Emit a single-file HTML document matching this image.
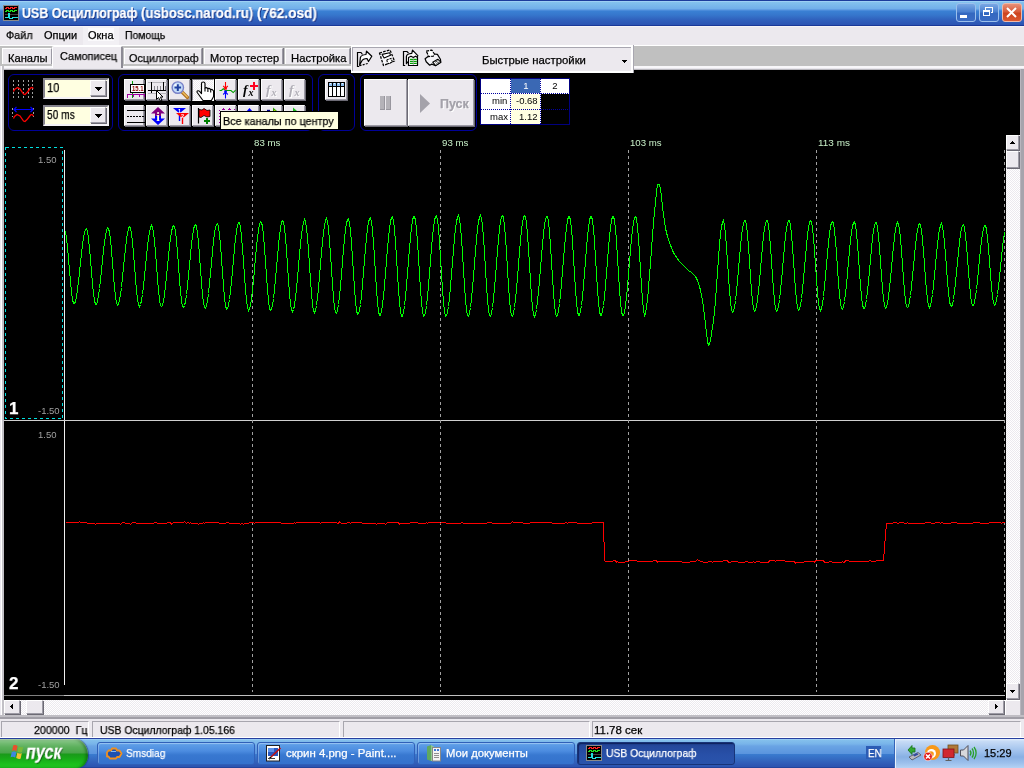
<!DOCTYPE html>
<html lang="ru"><head><meta charset="utf-8"><title>USB Осциллограф</title>
<style>
html,body{margin:0;padding:0;}
body{width:1024px;height:768px;overflow:hidden;background:#ece9ee;font-family:"Liberation Sans", sans-serif;position:relative;}
.a{position:absolute;box-sizing:border-box;}
.t{position:absolute;white-space:pre;will-change:transform;}
.k{-webkit-text-stroke:0.25px currentColor;}
svg{position:absolute;overflow:visible;will-change:transform;}
.btn{position:absolute;box-sizing:border-box;background:#ece9ee;border-top:1px solid #fff;border-left:1px solid #fff;border-right:1px solid #9c9aa4;border-bottom:1px solid #9c9aa4;box-shadow:1px 1px 0 #6c6a74;}
.dith{background-color:#fff;background-image:linear-gradient(45deg,#ece9ee 25%,transparent 25%,transparent 75%,#ece9ee 75%),linear-gradient(45deg,#ece9ee 25%,transparent 25%,transparent 75%,#ece9ee 75%);background-size:2px 2px;background-position:0 0,1px 1px;}
</style></head>
<body>
<div class="a" style="left:0px;top:0px;width:1024px;height:26px;background:linear-gradient(to bottom,#1c3c9c 0px,#1c3c9c 1px,#9dd0f4 1px,#9dd0f4 2px,#84c2ee 2px,#72b0ea 8.5px,#5a96e0 10px,#3a80d4 11px,#3676cc 15px,#3060bc 20px,#2c54b2 25px,#1a3898 25px,#1a3898 26px);"></div>
<svg style="left:3px;top:5px" width="16" height="16" viewBox="0 0 16 16" shape-rendering="crispEdges">
<rect x="0" y="0" width="16" height="16" fill="#8a8a8a"/><rect x="1" y="1" width="14" height="14" fill="#000"/>
<path d="M1.5 3.5h2v-1h2v1h2v-1h2v1h2v-1h2" stroke="#ff2020" fill="none"/>
<path d="M1.5 6.5h2v-1h2v1h2v-1h2v1h2v-1h2" stroke="#20e020" fill="none"/>
<path d="M1.5 9.5h13" stroke="#404040" fill="none"/>
<path d="M1.5 12.5h4v-4h1v5h3v-1h5" stroke="#20e0e0" fill="none"/>
</svg>
<span id="t1" class="t k" style="left:22.00px;top:3.55px;font-size:14px;line-height:18px;color:#fff;font-weight:bold;font-style:normal;text-shadow:1px 1px 0 #1a2f80;transform:scaleX(0.8881);transform-origin:0 100%;">USB Осциллограф </span>
<span id="t2" class="t k" style="left:140.70px;top:3.55px;font-size:14px;line-height:18px;color:#fff;font-weight:bold;font-style:normal;text-shadow:1px 1px 0 #1a2f80;transform:scaleX(0.9431);transform-origin:0 100%;">(usbosc.narod.ru) </span>
<span id="t3" class="t k" style="left:257.00px;top:3.55px;font-size:14px;line-height:18px;color:#fff;font-weight:bold;font-style:normal;text-shadow:1px 1px 0 #1a2f80;transform:scaleX(0.9754);transform-origin:0 100%;">(762.osd)</span>
<div class="a" style="left:956px;top:3px;width:20px;height:19px;border-radius:3px;border:1px solid #9cc0ec;background:linear-gradient(to bottom,#7aa8e4 0%,#4a80d0 45%,#3468c0 55%,#3a6cc4 100%);"></div><div class="a" style="left:960px;top:15px;width:7px;height:3px;background:#fff;"></div>
<div class="a" style="left:979px;top:3px;width:20px;height:19px;border-radius:3px;border:1px solid #9cc0ec;background:linear-gradient(to bottom,#7aa8e4 0%,#4a80d0 45%,#3468c0 55%,#3a6cc4 100%);"></div><svg style="left:978px;top:3px" width="20" height="19" viewBox="0 0 20 19" shape-rendering="crispEdges"><path d="M7.5 6.5v-2h7v5h-2" fill="none" stroke="#fff" stroke-width="1"/><rect x="5.5" y="7" width="6" height="5.5" fill="none" stroke="#fff" stroke-width="1"/><path d="M5 7.5h7" stroke="#fff" stroke-width="2"/></svg>
<div class="a" style="left:1002px;top:3px;width:20px;height:19px;border-radius:3px;border:1px solid #f0b8a8;background:linear-gradient(to bottom,#e89078 0%,#d85c3c 45%,#cc4420 55%,#dc5830 100%);"></div><svg style="left:1002px;top:3px" width="20" height="19" viewBox="0 0 20 19"><path d="M5 5l9 9M14 5l-9 9" fill="none" stroke="#fff" stroke-width="2"/></svg>
<div class="a" style="left:0px;top:26px;width:1024px;height:1px;background:#f6f4f6;"></div>
<div class="a" style="left:83px;top:27px;width:36px;height:18px;background:#f2f0f4;"></div>
<div class="a" style="left:88px;top:28px;width:26px;height:13px;background:#fbfafc;"></div>
<span id="t4" class="t k" style="left:5.50px;top:28.19px;font-size:11px;line-height:14px;color:#000;font-weight:normal;font-style:normal;transform:scaleX(0.9815);transform-origin:0 100%;">Файл</span>
<span id="t5" class="t k" style="left:43.50px;top:28.19px;font-size:11px;line-height:14px;color:#000;font-weight:normal;font-style:normal;transform:scaleX(1.0000);transform-origin:0 100%;">Опции</span>
<span id="t6" class="t k" style="left:88.00px;top:28.19px;font-size:11px;line-height:14px;color:#000;font-weight:normal;font-style:normal;transform:scaleX(1.0000);transform-origin:0 100%;">Окна</span>
<span id="t7" class="t k" style="left:125.00px;top:28.19px;font-size:11px;line-height:14px;color:#000;font-weight:normal;font-style:normal;transform:scaleX(0.9465);transform-origin:0 100%;">Помощь</span>
<div class="a" style="left:0px;top:45px;width:1024px;height:1px;background:#fff;"></div>
<div class="a" style="left:0px;top:46px;width:1024px;height:20px;background:#c0c0c0;"></div>
<div class="a" style="left:0px;top:66px;width:1024px;height:2px;background:#f8f7fa;"></div>
<div class="a" style="left:2px;top:68px;width:1022px;height:1px;background:#e8e6ec;"></div>
<div class="a" style="left:2px;top:69px;width:1022px;height:1px;background:#b8b6bc;"></div>
<div class="a" style="left:2px;top:48px;width:50px;height:16px;background:#ece9ee;border-top:1px solid #fff;border-left:1px solid #fff;border-right:1px solid #9c9aa4;box-shadow:1px 0 0 #7c7a84;"></div><span id="t8" class="t k" style="left:8.40px;top:51.19px;font-size:11px;line-height:14px;color:#000;font-weight:normal;font-style:normal;transform:scaleX(1.0128);transform-origin:0 100%;">Каналы</span>
<div class="a" style="left:124px;top:48px;width:78px;height:16px;background:#ece9ee;border-top:1px solid #fff;border-left:1px solid #fff;border-right:1px solid #9c9aa4;box-shadow:1px 0 0 #7c7a84;"></div><span id="t9" class="t k" style="left:128.50px;top:51.19px;font-size:11px;line-height:14px;color:#000;font-weight:normal;font-style:normal;transform:scaleX(0.9831);transform-origin:0 100%;">Осциллограф</span>
<div class="a" style="left:204px;top:48px;width:79px;height:16px;background:#ece9ee;border-top:1px solid #fff;border-left:1px solid #fff;border-right:1px solid #9c9aa4;box-shadow:1px 0 0 #7c7a84;"></div><span id="t10" class="t k" style="left:210.00px;top:51.19px;font-size:11px;line-height:14px;color:#000;font-weight:normal;font-style:normal;transform:scaleX(1.0000);transform-origin:0 100%;">Мотор тестер</span>
<div class="a" style="left:285px;top:48px;width:65px;height:16px;background:#ece9ee;border-top:1px solid #fff;border-left:1px solid #fff;border-right:1px solid #9c9aa4;box-shadow:1px 0 0 #7c7a84;"></div><span id="t11" class="t k" style="left:290.70px;top:51.19px;font-size:11px;line-height:14px;color:#000;font-weight:normal;font-style:normal;transform:scaleX(1.0241);transform-origin:0 100%;">Настройка</span>
<div class="a" style="left:52px;top:46px;width:71px;height:22px;background:#ece9ee;border-top:1px solid #fff;border-left:1px solid #fff;border-right:2px solid #8c8a94;border-radius:2px 2px 0 0;"></div><span id="t12" class="t k" style="left:59.70px;top:49.19px;font-size:11px;line-height:14px;color:#000;font-weight:normal;font-style:normal;transform:scaleX(0.9879);transform-origin:0 100%;">Самописец</span>
<div class="a" style="left:0px;top:66px;width:4px;height:653px;background:linear-gradient(to right,#ece9f0 0px,#ece9f0 1px,#fff 1px,#fff 2px,#c2c0c6 2px,#c2c0c6 4px);"></div>
<div class="a" style="left:4px;top:70px;width:1016px;height:630px;background:#000;"></div>
<div class="a" style="left:1020px;top:69px;width:4px;height:650px;background:linear-gradient(to right,#b8b6be 0px,#b8b6be 1px,#a6a4ac 1px,#a6a4ac 4px);"></div>
<div class="a" style="left:351px;top:45px;width:282px;height:28px;background:#ece9ee;border-top:2px solid #fff;border-left:1px solid #fff;border-right:2px solid #fff;border-bottom:2px solid #fff;box-shadow:1px 0 0 #a8a6b0;"></div>
<div class="a" style="left:352px;top:47px;width:279px;height:1px;background:#a8a6b0;"></div>
<div class="a" style="left:352px;top:47px;width:1px;height:24px;background:#a8a6b0;"></div>
<span id="t13" class="t k" style="left:482.00px;top:53.19px;font-size:11px;line-height:14px;color:#000;font-weight:normal;font-style:normal;transform:scaleX(1.0297);transform-origin:0 100%;">Быстрые настройки</span>
<svg style="left:622px;top:60px" width="5" height="3" viewBox="0 0 5 3" shape-rendering="crispEdges"><path d="M0 0h5v1h-1v1h-1v1h-1v-1h-1v-1h-1z" fill="#000"/></svg>
<div class="a" style="left:8px;top:74px;width:105px;height:57px;border:1px solid #000098;border-radius:6px;"></div>
<div class="a" style="left:118px;top:74px;width:195px;height:57px;border:1px solid #000098;border-radius:6px;"></div>
<div class="a" style="left:318px;top:74px;width:37px;height:57px;border:1px solid #000098;border-radius:6px;"></div>
<div class="a" style="left:360px;top:74px;width:117px;height:57px;border:1px solid #000098;border-radius:6px;"></div>
<div class="a" style="left:43px;top:78px;width:66px;height:21px;background:#ffffe1;border-top:2px solid #84828c;border-left:2px solid #84828c;border-right:2px solid #f4f2f6;border-bottom:2px solid #f4f2f6;"></div><div class="btn" style="left:90px;top:80px;width:16px;height:16px;"></div><svg style="left:95px;top:87px" width="7" height="4" viewBox="0 0 7 4" shape-rendering="crispEdges"><path d="M0 0h7l-3.5 4z" fill="#000"/></svg><span id="t14" class="t k" style="left:47.00px;top:79.84px;font-size:12px;line-height:16px;color:#000;font-weight:normal;font-style:normal;transform:scaleX(0.9231);transform-origin:0 100%;">10</span>
<div class="a" style="left:43px;top:105px;width:66px;height:21px;background:#ffffe1;border-top:2px solid #84828c;border-left:2px solid #84828c;border-right:2px solid #f4f2f6;border-bottom:2px solid #f4f2f6;"></div><div class="btn" style="left:90px;top:107px;width:16px;height:16px;"></div><svg style="left:95px;top:114px" width="7" height="4" viewBox="0 0 7 4" shape-rendering="crispEdges"><path d="M0 0h7l-3.5 4z" fill="#000"/></svg><span id="t15" class="t k" style="left:47.00px;top:106.84px;font-size:12px;line-height:16px;color:#000;font-weight:normal;font-style:normal;transform:scaleX(0.8485);transform-origin:0 100%;">50 ms</span>
<div class="btn" style="left:124px;top:79px;width:20px;height:21px;"></div>
<div class="btn" style="left:124px;top:105px;width:20px;height:21px;"></div>
<div class="btn" style="left:146px;top:79px;width:21px;height:21px;"></div>
<div class="btn" style="left:146px;top:105px;width:21px;height:21px;"></div>
<div class="btn" style="left:169px;top:79px;width:21px;height:21px;"></div>
<div class="btn" style="left:169px;top:105px;width:21px;height:21px;"></div>
<div class="a dith" style="left:192px;top:79px;width:22px;height:22px;border-top:1px solid #84828c;border-left:1px solid #84828c;border-right:1px solid #fff;border-bottom:1px solid #fff;"></div>
<div class="btn" style="left:192px;top:105px;width:21px;height:21px;"></div>
<div class="btn" style="left:215px;top:79px;width:21px;height:21px;"></div>
<div class="btn" style="left:215px;top:105px;width:21px;height:21px;"></div>
<div class="btn" style="left:238px;top:79px;width:21px;height:21px;"></div>
<div class="btn" style="left:238px;top:105px;width:21px;height:21px;"></div>
<div class="btn" style="left:261px;top:79px;width:21px;height:21px;"></div>
<div class="btn" style="left:261px;top:105px;width:21px;height:21px;"></div>
<div class="btn" style="left:284px;top:79px;width:21px;height:21px;"></div>
<div class="btn" style="left:284px;top:105px;width:21px;height:21px;"></div>
<div class="btn" style="left:325px;top:79px;width:22px;height:21px;"></div>
<div class="btn" style="left:364px;top:79px;width:43px;height:47px;"></div>
<div class="btn" style="left:408px;top:79px;width:66px;height:47px;"></div>
<svg style="left:8px;top:76px" width="30" height="26" viewBox="0 0 30 26" shape-rendering="crispEdges"><path d="M5.5 4V22" stroke="#a0a0a0" stroke-dasharray="2 2"/><path d="M10.5 4V22" stroke="#a0a0a0" stroke-dasharray="2 2"/><path d="M15.5 4V22" stroke="#a0a0a0" stroke-dasharray="2 2"/><path d="M20.5 4V22" stroke="#a0a0a0" stroke-dasharray="2 2"/><path d="M24.5 4V22" stroke="#a0a0a0" stroke-dasharray="2 2"/><path d="M5.5 15.5L6.5 13.5L9.5 11.5L12 13L15.5 18L17 18.5L19.5 16L22.5 12L24 11.5L25.5 12.5" stroke="#ff0000" stroke-width="1.3" fill="none" shape-rendering="auto"/></svg><svg style="left:8px;top:104px" width="30" height="22" viewBox="0 0 30 22" shape-rendering="crispEdges"><path d="M4.5 4V13M25.5 4V13" stroke="#a0a0a0" stroke-dasharray="2 2"/><path d="M6 5.5H25M8.5 3L6 5.5L8.5 8M22.500 3L25 5.5L22.500 8" stroke="#0000ff" stroke-width="1.2" fill="none" shape-rendering="auto"/><path d="M5.500 14.5L6.500 12.5L9 10.500L12 12L15.500 17L17 17.500L19.500 15L22.500 11L24 10.500L25.500 12" stroke="#ff0000" stroke-width="1.3" fill="none" shape-rendering="auto"/></svg><svg style="left:124px;top:79px" width="22" height="22" viewBox="0 0 22 22" shape-rendering="crispEdges"><path d="M8.500 2V19" stroke="#00a000"/><path d="M3.500 19V15.500H20.500V18M9.500 15.500V18M15.500 15.500V18" stroke="#a000a0" fill="none"/><rect x="6.500" y="5.500" width="14" height="8" fill="#fff" stroke="#000"/><text x="8" y="12" font-size="7" font-weight="bold" fill="#900000" style="font-family:'Liberation Sans',sans-serif" textLength="11.500" lengthAdjust="spacingAndGlyphs">15.1</text></svg><svg style="left:146px;top:79px" width="22" height="22" viewBox="0 0 22 22" shape-rendering="crispEdges"><path d="M2 3.500H21M2 14.500H21" stroke="#b8b6bc"/><path d="M8.500 7V11M11.500 7V11M14.500 7V11M19.500 7V11" stroke="#88868e"/><path d="M2 11.500H20M5.500 3V14M17.500 3V11" stroke="#000"/><path d="M10.500 11.500V20.500L12.500 18.500L14.500 22L16 21.500L14.500 18L17 18Z" fill="#fff" stroke="#000" stroke-width="1" shape-rendering="auto"/></svg><svg style="left:169px;top:79px" width="22" height="22" viewBox="0 0 22 22"><path d="M12.500 12.500L18.500 18.500" stroke="#b07020" stroke-width="3.200" stroke-linecap="round"/><path d="M12.800 12.500L18.300 18" stroke="#f0c060" stroke-width="1.200" stroke-linecap="round"/><circle cx="8.800" cy="8.600" r="5.700" fill="#c4dcf8" stroke="#7880c8" stroke-width="1.400"/><circle cx="7" cy="6.500" r="1.800" fill="#fff" opacity="0.800"/><path d="M5.500 8.600H12.100M8.800 5.300V11.900" stroke="#2040a0" stroke-width="2"/></svg><svg style="left:192px;top:79px" width="23" height="23" viewBox="0 0 23 23"><path d="M11 21.500L5.200 13.500Q4.600 12.200 5.800 11.800Q6.800 11.500 7.600 12.400L9.500 14.600V4.500Q9.500 3 11.200 3Q13 3 13 4.500V9Q14.300 8.200 15.800 9.500Q17.200 8.900 18.600 10.400Q20.400 10 21.600 12V17.500L19.400 21.500Z" fill="#fff" stroke="#000" stroke-width="1.150" stroke-linejoin="round"/><path d="M13 9V12.500M15.900 9.700V13M18.700 10.800V13.500" stroke="#000" stroke-width="1.100"/></svg><svg style="left:215px;top:79px" width="22" height="22" viewBox="0 0 22 22"><path d="M4.500 11.500H6.500L8.300 9.700L10.400 11.500H16L18.200 13.600L20.600 11.200" stroke="#00a000" fill="none" stroke-width="1.100"/><path d="M10.500 3V9" stroke="#ff0000" stroke-width="1.100"/><path d="M8.200 7L10.500 9.300L12.800 7" stroke="#ff0000" stroke-width="1.100" fill="none"/><rect x="9.200" y="8.600" width="2.700" height="2" fill="#ff0000"/><path d="M10.500 13V19.500" stroke="#0000ff" stroke-width="1.100"/><path d="M8.200 15.500L10.500 13.200L12.800 15.500" stroke="#0000ff" stroke-width="1.100" fill="none"/><rect x="9.200" y="11.600" width="2.700" height="2" fill="#0000ff"/></svg><svg style="left:238px;top:79px" width="22" height="22" viewBox="0 0 22 22"><text x="5" y="15" font-size="13.500" font-style="italic" font-weight="bold" fill="#000" style="font-family:'Liberation Serif',serif">f</text><text x="10.500" y="17" font-size="10" font-style="italic" font-weight="bold" fill="#000" style="font-family:'Liberation Serif',serif">x</text><path d="M12 7H20M16 3V11" stroke="#ff0020" stroke-width="2" shape-rendering="crispEdges"/></svg><svg style="left:261px;top:79px" width="22" height="22" viewBox="0 0 22 22"><text x="6" y="16" font-size="13.500" font-style="italic" font-weight="bold" fill="#fff" style="font-family:'Liberation Serif',serif">f</text><text x="11.500" y="18" font-size="10" font-style="italic" font-weight="bold" fill="#fff" style="font-family:'Liberation Serif',serif">x</text><text x="5" y="15" font-size="13.500" font-style="italic" font-weight="bold" fill="#b0aeb6" style="font-family:'Liberation Serif',serif">f</text><text x="10.500" y="17" font-size="10" font-style="italic" font-weight="bold" fill="#b0aeb6" style="font-family:'Liberation Serif',serif">x</text></svg><svg style="left:284px;top:79px" width="22" height="22" viewBox="0 0 22 22"><text x="6" y="16" font-size="13.500" font-style="italic" font-weight="bold" fill="#fff" style="font-family:'Liberation Serif',serif">f</text><text x="11.500" y="18" font-size="10" font-style="italic" font-weight="bold" fill="#fff" style="font-family:'Liberation Serif',serif">x</text><text x="5" y="15" font-size="13.500" font-style="italic" font-weight="bold" fill="#b0aeb6" style="font-family:'Liberation Serif',serif">f</text><text x="10.500" y="17" font-size="10" font-style="italic" font-weight="bold" fill="#b0aeb6" style="font-family:'Liberation Serif',serif">x</text></svg><svg style="left:124px;top:105px" width="22" height="22" viewBox="0 0 22 22" shape-rendering="crispEdges"><path d="M3 5.500H21M3 17.500H21" stroke="#000"/><path d="M3 11.500H21" stroke="#000" stroke-dasharray="2 1"/></svg><svg style="left:146px;top:105px" width="22" height="22" viewBox="0 0 22 22"><path d="M12 2L19 8.500H15V11H9V8.500H5Z" fill="#800080"/><path d="M12 20L19 13.500H15V11H9V13.500H5Z" fill="#0000ff"/><text x="12" y="16" font-size="13" font-weight="bold" text-anchor="middle" fill="#ffffe0" style="font-family:'Liberation Serif',serif">i</text></svg><svg style="left:169px;top:105px" width="22" height="22" viewBox="0 0 22 22"><path d="M4 3H17L10.500 8.500Z" fill="#0000ff"/><path d="M10.500 8V16" stroke="#0000ff" stroke-width="1.400"/><path d="M7 8H20L13.500 13.500Z" fill="#ff0000"/><path d="M13.500 13V19" stroke="#ff0000" stroke-width="1.400"/><text x="10.500" y="8" font-size="5.500" font-weight="bold" text-anchor="middle" fill="#fff" style="font-family:'Liberation Sans',sans-serif">1</text><text x="13.500" y="13.200" font-size="5.500" font-weight="bold" text-anchor="middle" fill="#fff" style="font-family:'Liberation Sans',sans-serif">2</text></svg><svg style="left:192px;top:105px" width="22" height="22" viewBox="0 0 22 22"><path d="M6.500 3V18.500" stroke="#000" stroke-width="1.200"/><path d="M7 4.500L10 5L12 3.500L15 5.500L18 5V11.500L15 12L12 10.500L9 12.500L7 12Z" fill="#ff0000" stroke="#000" stroke-width="0.800"/><path d="M12 15.500H18M15 12.500V18.500" stroke="#008000" stroke-width="2" shape-rendering="crispEdges"/></svg><svg style="left:215px;top:105px" width="22" height="22" viewBox="0 0 22 22" shape-rendering="crispEdges"><path d="M4.500 5V18" stroke="#a000a0" stroke-dasharray="1 2"/><path d="M6 5l2-2l2 2zM12 5l2-2l2 2zM18 5l2-2l0 2z" fill="#a000a0"/></svg><svg style="left:238px;top:105px" width="22" height="22" viewBox="0 0 22 22"><path d="M8 7L11.500 3L15 7Z" fill="#0000ff"/></svg><svg style="left:261px;top:105px" width="22" height="22" viewBox="0 0 22 22"><path d="M6 5.500H9" stroke="#000090" stroke-width="1.400"/><path d="M12 2.500V8L16 6Z" fill="#30a000"/><path d="M13 5V7L15 6Z" fill="#e0e000"/></svg><svg style="left:284px;top:105px" width="22" height="22" viewBox="0 0 22 22"><path d="M9 2.500V8L13 6Z" fill="#20c020"/></svg><svg style="left:325px;top:79px" width="23" height="22" viewBox="0 0 23 22" shape-rendering="crispEdges"><rect x="3.500" y="3.500" width="16" height="14" fill="#fff" stroke="#000"/><rect x="4" y="4" width="15" height="3" fill="#90c0f0"/><path d="M7.500 4V17M11.500 4V17M15.500 4V17" stroke="#000"/><path d="M4 7.500H19" stroke="#000"/><path d="M5.500 4V5M9.500 4V5M13.500 4V5M17.500 4V5" stroke="#fff"/></svg><svg style="left:356px;top:49px" width="18" height="19" viewBox="0 0 18 19"><path d="M1.500 18V3.500H5L6.500 5.500M1.500 17.500H3.200" stroke="#000" stroke-width="1.200" fill="none"/><path d="M3.600 16.200L4.400 8.500Q5 6 10 5.500L10.500 2.200L15.800 7.200L12.500 12.500L11 9.500Q7 9.500 5.500 12.500Z" fill="#fff" stroke="#000" stroke-width="1.200" stroke-linejoin="round"/><path d="M3.600 16.700L12.500 14.300" stroke="#000" stroke-width="1.200" stroke-dasharray="2 1.200" fill="none"/></svg><svg style="left:378px;top:49px" width="18" height="19" viewBox="0 0 18 19"><path d="M1.500 4L12 1L16.500 12L5.500 16.500Z" fill="#f8f7fa" stroke="#000" stroke-width="1.300" stroke-dasharray="2.600 1.200" stroke-linejoin="round"/><path d="M4.100 5.400L11.700 3.700L12.500 6.300L6.100 8.900Z" fill="#fff" stroke="#000" stroke-width="1.100" stroke-linejoin="round"/><path d="M8.700 11L13 9.500L14.500 13L10 14.700Z" fill="#fff" stroke="#000" stroke-width="1.100" stroke-dasharray="2 1"/></svg><svg style="left:402px;top:49px" width="18" height="19" viewBox="0 0 18 19"><path d="M1.500 17V2.500H5L6.500 4M1.500 16.500H3.200" stroke="#000" stroke-width="1.200" fill="none"/><path d="M4.400 14.500V7.600Q4.600 4.800 9.800 4.400L10.500 1.100L15.800 6.700L14 10H9Z" fill="#fff" stroke="#000" stroke-width="1.200" stroke-linejoin="round"/><path d="M6.500 16.500V8.500L9 7.200L11.300 8.500L13.500 7.200L15.500 8.500V16.500Z" fill="#fff" stroke="#000" stroke-width="1.200" stroke-linejoin="round"/><path d="M8 10.400H14.800M8 12.300H14.800M8 14.300H14.800" stroke="#00a000" stroke-width="1.200"/><path d="M11.300 9V16" stroke="#a0a0a0" stroke-width="0.800"/></svg><svg style="left:424px;top:49px" width="18" height="19" viewBox="0 0 18 19"><path d="M4.400 7.200L1.100 9.700L2.200 12.750L5.700 16.200L7.800 15.100L11.700 16.600L16.800 13.200L16.400 10.200L13.400 5.400L10.400 5Z" fill="#f4f3f7" stroke="#000" stroke-width="1.200" stroke-linejoin="round"/><path d="M2.200 2.200L7.800 1.100L10.400 5L9.300 7.200L4.400 7.600L3.500 4.600Z" fill="#fff" stroke="#000" stroke-width="1.200" stroke-dasharray="3 1" stroke-linejoin="round"/><path d="M8.700 13.200L13.800 10.200L16.800 13.200L11.700 16.600Z" fill="#fff" stroke="#000" stroke-width="1.100" stroke-linejoin="round"/><path d="M11 13.300L13.800 11.800M12.300 14.500L15 13" stroke="#000" stroke-width="0.700"/></svg>
<div class="a" style="left:380px;top:96px;width:5px;height:14px;background:#b4b2b8;border-right:1px solid #98969e;border-bottom:1px solid #98969e;"></div>
<div class="a" style="left:386px;top:96px;width:5px;height:14px;background:#b4b2b8;border-right:1px solid #98969e;border-bottom:1px solid #98969e;"></div>
<svg style="left:420px;top:94px" width="10" height="19" viewBox="0 0 10 19"><path d="M0 0L10 9.5L0 19z" fill="#a4a2aa"/></svg>
<span id="t16" class="t k" style="left:440.00px;top:95.84px;font-size:12px;line-height:16px;color:#a4a2aa;font-weight:bold;font-style:normal;text-shadow:1px 1px 0 #fff;transform:scaleX(1.0357);transform-origin:0 100%;">Пуск</span>
<div class="a" style="left:480px;top:78px;width:90px;height:47px;background:#fff;border:1px solid #000080;"></div>
<div class="a" style="left:511px;top:79px;width:29px;height:14px;background:#3a68b4;"></div>
<div class="a" style="left:511px;top:94px;width:29px;height:30px;background:#ffffe1;"></div>
<div class="a" style="left:541px;top:94px;width:28px;height:30px;background:#000;"></div>
<div class="a" style="left:481px;top:93px;width:88px;height:1px;background:repeating-linear-gradient(to right,#0000a0 0 1px,transparent 1px 2px);"></div>
<div class="a" style="left:481px;top:109px;width:88px;height:1px;background:repeating-linear-gradient(to right,#0000a0 0 1px,transparent 1px 2px);"></div>
<div class="a" style="left:510px;top:79px;width:1px;height:45px;background:repeating-linear-gradient(to bottom,#0000a0 0 1px,transparent 1px 2px);"></div>
<div class="a" style="left:540px;top:79px;width:1px;height:45px;background:repeating-linear-gradient(to bottom,#0000a0 0 1px,transparent 1px 2px);"></div>
<span id="t17" class="t" style="left:375.50px;width:300px;text-align:center;top:79.71px;font-size:9.5px;line-height:12px;color:#fff;font-weight:normal;font-style:normal;">1</span>
<span id="t18" class="t" style="left:405.00px;width:300px;text-align:center;top:79.71px;font-size:9.5px;line-height:12px;color:#000;font-weight:normal;font-style:normal;">2</span>
<span id="t19" class="t" style="right:516.50px;top:94.71px;font-size:9.5px;line-height:12px;color:#000;font-weight:normal;font-style:normal;">min</span>
<span id="t20" class="t" style="right:516.50px;top:110.71px;font-size:9.5px;line-height:12px;color:#000;font-weight:normal;font-style:normal;">max</span>
<span id="t21" class="t" style="right:486.50px;top:94.71px;font-size:9.5px;line-height:12px;color:#000;font-weight:normal;font-style:normal;">-0.68</span>
<span id="t22" class="t" style="right:486.50px;top:110.71px;font-size:9.5px;line-height:12px;color:#000;font-weight:normal;font-style:normal;">1.12</span>
<svg style="left:0;top:0" width="1024" height="768" viewBox="0 0 1024 768" shape-rendering="crispEdges"><rect x="5.5" y="147.5" width="57" height="271" fill="none" stroke="#00e0e0" stroke-width="1" stroke-dasharray="3 3"/><path d="M64.5 150V685" stroke="#f0f0f0" stroke-width="1" fill="none"/><path d="M4 420.5H1005" stroke="#d0d0d0" stroke-width="1" fill="none"/><path d="M4 695.5H64" stroke="#808080" stroke-width="1" fill="none"/><path d="M64 695.5H1005" stroke="#c0c0c0" stroke-width="1" fill="none"/><path d="M252.5 150V692" stroke="#a0a0a0" stroke-width="1" stroke-dasharray="3 3" fill="none"/><path d="M440.5 150V692" stroke="#a0a0a0" stroke-width="1" stroke-dasharray="3 3" fill="none"/><path d="M628.5 150V692" stroke="#a0a0a0" stroke-width="1" stroke-dasharray="3 3" fill="none"/><path d="M816.5 150V692" stroke="#a0a0a0" stroke-width="1" stroke-dasharray="3 3" fill="none"/><path d="M1004.5 150V692" stroke="#a0a0a0" stroke-width="1" stroke-dasharray="3 3" fill="none"/><path d="M65.5,231.5L66.5,237.5L67.5,247.5L68.5,258.5L69.5,270.5L70.5,281.5L71.5,292.5L72.5,299.5L73.5,303.5L74.5,303.5L75.5,301.5L76.5,296.5L77.5,289.5L78.5,281.5L79.5,272.5L80.5,262.5L81.5,253.5L82.5,244.5L83.5,237.5L84.5,232.5L85.5,229.5L86.5,228.5L87.5,231.5L88.5,238.5L89.5,248.5L90.5,259.5L91.5,272.5L92.5,283.5L93.5,293.5L94.5,300.5L95.5,304.5L96.5,304.5L97.5,301.5L98.5,295.5L99.5,288.5L100.5,279.5L101.5,270.5L102.5,260.5L103.5,250.5L104.5,242.5L105.5,235.5L106.5,230.5L107.5,227.5L108.5,228.5L109.5,232.5L110.5,239.5L111.5,250.5L112.5,262.5L113.5,275.5L114.5,287.5L115.5,296.5L116.5,302.5L117.5,305.5L118.5,304.5L119.5,300.5L120.5,294.5L121.5,287.5L122.5,277.5L123.5,267.5L124.5,257.5L125.5,248.5L126.5,239.5L127.5,233.5L128.5,228.5L129.5,226.5L130.5,227.5L131.5,233.5L132.5,241.5L133.5,253.5L134.5,265.5L135.5,278.5L136.5,290.5L137.5,299.5L138.5,304.5L139.5,306.5L140.5,304.5L141.5,300.5L142.5,294.5L143.5,285.5L144.5,276.5L145.5,266.5L146.5,256.5L147.5,246.5L148.5,238.5L149.5,232.5L150.5,227.5L151.5,225.5L152.5,227.5L153.5,232.5L154.5,241.5L155.5,252.5L156.5,265.5L157.5,278.5L158.5,290.5L159.5,299.5L160.5,305.5L161.5,306.5L162.5,305.5L163.5,301.5L164.5,294.5L165.5,286.5L166.5,276.5L167.5,266.5L168.5,256.5L169.5,246.5L170.5,238.5L171.5,231.5L172.5,227.5L173.5,225.5L174.5,226.5L175.5,231.5L176.5,240.5L177.5,252.5L178.5,265.5L179.5,279.5L180.5,291.5L181.5,300.5L182.5,306.5L183.5,307.5L184.5,305.5L185.5,301.5L186.5,294.5L187.5,285.5L188.5,275.5L189.5,265.5L190.5,254.5L191.5,244.5L192.5,236.5L193.5,229.5L194.5,225.5L195.5,224.5L196.5,226.5L197.5,232.5L198.5,242.5L199.5,255.5L200.5,269.5L201.5,282.5L202.5,294.5L203.5,302.5L204.5,307.5L205.5,308.5L206.5,305.5L207.5,300.5L208.5,293.5L209.5,283.5L210.5,273.5L211.5,262.5L212.5,251.5L213.5,241.5L214.5,233.5L215.5,227.5L216.5,224.5L217.5,223.5L218.5,226.5L219.5,234.5L220.5,245.5L221.5,258.5L222.5,272.5L223.5,285.5L224.5,297.5L225.5,305.5L226.5,309.5L227.5,308.5L228.5,305.5L229.5,299.5L230.5,291.5L231.5,281.5L232.5,270.5L233.5,259.5L234.5,248.5L235.5,238.5L236.5,231.5L237.5,225.5L238.5,222.5L239.5,222.5L240.5,227.5L241.5,236.5L242.5,248.5L243.5,261.5L244.5,276.5L245.5,289.5L246.5,300.5L247.5,307.5L248.5,310.5L249.5,308.5L250.5,305.5L251.5,298.5L252.5,290.5L253.5,280.5L254.5,269.5L255.5,257.5L256.5,247.5L257.5,237.5L258.5,230.5L259.5,224.5L260.5,221.5L261.5,222.5L262.5,226.5L263.5,235.5L264.5,247.5L265.5,261.5L266.5,276.5L267.5,289.5L268.5,300.5L269.5,308.5L270.5,310.5L271.5,309.5L272.5,305.5L273.5,298.5L274.5,289.5L275.5,279.5L276.5,267.5L277.5,256.5L278.5,245.5L279.5,235.5L280.5,228.5L281.5,222.5L282.5,220.5L283.5,221.5L284.5,227.5L285.5,237.5L286.5,250.5L287.5,265.5L288.5,280.5L289.5,293.5L290.5,303.5L291.5,309.5L292.5,311.5L293.5,309.5L294.5,305.5L295.5,297.5L296.5,288.5L297.5,277.5L298.5,266.5L299.5,254.5L300.5,243.5L301.5,234.5L302.5,227.5L303.5,222.5L304.5,219.5L305.5,221.5L306.5,227.5L307.5,237.5L308.5,250.5L309.5,265.5L310.5,280.5L311.5,293.5L312.5,304.5L313.5,310.5L314.5,312.5L315.5,310.5L316.5,305.5L317.5,297.5L318.5,288.5L319.5,276.5L320.5,264.5L321.5,252.5L322.5,241.5L323.5,232.5L324.5,225.5L325.5,220.5L326.5,218.5L327.5,221.5L328.5,228.5L329.5,240.5L330.5,254.5L331.5,269.5L332.5,284.5L333.5,297.5L334.5,307.5L335.5,312.5L336.5,313.5L337.5,310.5L338.5,304.5L339.5,296.5L340.5,285.5L341.5,274.5L342.5,261.5L343.5,249.5L344.5,238.5L345.5,229.5L346.5,223.5L347.5,219.5L348.5,218.5L349.5,222.5L350.5,230.5L351.5,243.5L352.5,257.5L353.5,273.5L354.5,288.5L355.5,301.5L356.5,310.5L357.5,314.5L358.5,313.5L359.5,310.5L360.5,304.5L361.5,295.5L362.5,284.5L363.5,272.5L364.5,260.5L365.5,248.5L366.5,237.5L367.5,228.5L368.5,222.5L369.5,218.5L370.5,217.5L371.5,221.5L372.5,230.5L373.5,242.5L374.5,257.5L375.5,273.5L376.5,289.5L377.5,301.5L378.5,311.5L379.5,315.5L380.5,315.5L381.5,311.5L382.5,304.5L383.5,296.5L384.5,285.5L385.5,273.5L386.5,260.5L387.5,248.5L388.5,237.5L389.5,228.5L390.5,221.5L391.5,217.5L392.5,216.5L393.5,220.5L394.5,229.5L395.5,242.5L396.5,257.5L397.5,274.5L398.5,289.5L399.5,302.5L400.5,311.5L401.5,316.5L402.5,316.5L403.5,312.5L404.5,305.5L405.5,296.5L406.5,285.5L407.5,273.5L408.5,260.5L409.5,248.5L410.5,237.5L411.5,227.5L412.5,220.5L413.5,216.5L414.5,216.5L415.5,220.5L416.5,229.5L417.5,241.5L418.5,257.5L419.5,273.5L420.5,289.5L421.5,302.5L422.5,311.5L423.5,316.5L424.5,315.5L425.5,312.5L426.5,305.5L427.5,296.5L428.5,285.5L429.5,273.5L430.5,260.5L431.5,248.5L432.5,236.5L433.5,227.5L434.5,220.5L435.5,216.5L436.5,215.5L437.5,219.5L438.5,228.5L439.5,241.5L440.5,257.5L441.5,273.5L442.5,289.5L443.5,302.5L444.5,311.5L445.5,316.5L446.5,315.5L447.5,312.5L448.5,306.5L449.5,297.5L450.5,286.5L451.5,274.5L452.5,262.5L453.5,249.5L454.5,238.5L455.5,228.5L456.5,221.5L457.5,217.5L458.5,215.5L459.5,218.5L460.5,226.5L461.5,238.5L462.5,253.5L463.5,269.5L464.5,285.5L465.5,299.5L466.5,309.5L467.5,315.5L468.5,316.5L469.5,313.5L470.5,307.5L471.5,298.5L472.5,288.5L473.5,276.5L474.5,263.5L475.5,250.5L476.5,239.5L477.5,229.5L478.5,221.5L479.5,217.5L480.5,215.5L481.5,218.5L482.5,225.5L483.5,237.5L484.5,252.5L485.5,269.5L486.5,285.5L487.5,299.5L488.5,309.5L489.5,315.5L490.5,316.5L491.5,313.5L492.5,307.5L493.5,298.5L494.5,288.5L495.5,276.5L496.5,263.5L497.5,250.5L498.5,239.5L499.5,229.5L500.5,221.5L501.5,216.5L502.5,215.5L503.5,217.5L504.5,225.5L505.5,237.5L506.5,252.5L507.5,269.5L508.5,285.5L509.5,299.5L510.5,309.5L511.5,315.5L512.5,316.5L513.5,313.5L514.5,307.5L515.5,299.5L516.5,289.5L517.5,277.5L518.5,264.5L519.5,252.5L520.5,240.5L521.5,230.5L522.5,222.5L523.5,217.5L524.5,215.5L525.5,216.5L526.5,223.5L527.5,234.5L528.5,248.5L529.5,264.5L530.5,281.5L531.5,295.5L532.5,307.5L533.5,314.5L534.5,316.5L535.5,314.5L536.5,309.5L537.5,301.5L538.5,291.5L539.5,280.5L540.5,268.5L541.5,255.5L542.5,244.5L543.5,233.5L544.5,225.5L545.5,219.5L546.5,216.5L547.5,216.5L548.5,221.5L549.5,231.5L550.5,245.5L551.5,261.5L552.5,277.5L553.5,292.5L554.5,304.5L555.5,313.5L556.5,316.5L557.5,315.5L558.5,310.5L559.5,303.5L560.5,294.5L561.5,283.5L562.5,271.5L563.5,258.5L564.5,247.5L565.5,236.5L566.5,227.5L567.5,220.5L568.5,216.5L569.5,216.5L570.5,220.5L571.5,228.5L572.5,241.5L573.5,257.5L574.5,273.5L575.5,289.5L576.5,302.5L577.5,311.5L578.5,315.5L579.5,315.5L580.5,311.5L581.5,305.5L582.5,296.5L583.5,285.5L584.5,273.5L585.5,260.5L586.5,248.5L587.5,236.5L588.5,227.5L589.5,220.5L590.5,216.5L591.5,216.5L592.5,220.5L593.5,228.5L594.5,241.5L595.5,257.5L596.5,273.5L597.5,289.5L598.5,302.5L599.5,311.5L600.5,315.5L601.5,315.5L602.5,311.5L603.5,305.5L604.5,296.5L605.5,285.5L606.5,273.5L607.5,260.5L608.5,248.5L609.5,236.5L610.5,227.5L611.5,220.5L612.5,216.5L613.5,216.5L614.5,220.5L615.5,228.5L616.5,241.5L617.5,257.5L618.5,273.5L619.5,289.5L620.5,302.5L621.5,311.5L622.5,315.5L623.5,315.5L624.5,312.5L625.5,305.5L626.5,297.5L627.5,286.5L628.5,274.5L629.5,262.5L630.5,249.5L631.5,238.5L632.5,229.5L633.5,222.5L634.5,217.5L635.5,216.5L636.5,218.5L637.5,226.5L638.5,238.5L639.5,253.5L640.5,269.5L641.5,285.5L642.5,299.5L643.5,309.5L644.5,315.5L645.5,313.5L646.5,306.5L647.5,300.5L648.5,287.5L649.5,275.5L650.5,262.5L651.5,249.5L652.5,235.5L653.5,222.5L654.5,212.5L655.5,201.5L656.5,192.5L657.5,184.5L658.5,184.5L659.5,184.5L660.5,189.5L661.5,196.5L662.5,206.5L663.5,214.5L664.5,220.5L665.5,228.5L666.5,232.5L667.5,236.5L668.5,239.5L669.5,242.5L670.5,245.5L671.5,247.5L672.5,250.5L673.5,252.5L674.5,254.5L675.5,255.5L676.5,257.5L677.5,258.5L678.5,260.5L679.5,261.5L680.5,262.5L681.5,263.5L682.5,264.5L683.5,265.5L684.5,266.5L685.5,267.5L686.5,268.5L687.5,269.5L688.5,270.5L689.5,271.5L690.5,271.5L691.5,272.5L692.5,273.5L693.5,274.5L694.5,275.5L695.5,276.5L696.5,278.5L697.5,280.5L698.5,283.5L699.5,286.5L700.5,290.5L701.5,295.5L702.5,300.5L703.5,307.5L704.5,315.5L705.5,324.5L706.5,332.5L707.5,341.5L708.5,345.5L709.5,344.5L710.5,340.5L711.5,333.5L712.5,327.5L713.5,320.5L714.5,312.5L715.5,299.5L716.5,286.5L717.5,272.5L718.5,257.5L719.5,244.5L720.5,234.5L721.5,226.5L722.5,222.5L723.5,220.5L724.5,225.5L725.5,234.5L726.5,247.5L727.5,261.5L728.5,276.5L729.5,290.5L730.5,301.5L731.5,309.5L732.5,312.5L733.5,311.5L734.5,307.5L735.5,300.5L736.5,291.5L737.5,281.5L738.5,269.5L739.5,257.5L740.5,246.5L741.5,236.5L742.5,228.5L743.5,223.5L744.5,220.5L745.5,220.5L746.5,225.5L747.5,234.5L748.5,246.5L749.5,261.5L750.5,276.5L751.5,290.5L752.5,301.5L753.5,308.5L754.5,311.5L755.5,310.5L756.5,306.5L757.5,299.5L758.5,291.5L759.5,280.5L760.5,269.5L761.5,257.5L762.5,246.5L763.5,236.5L764.5,228.5L765.5,223.5L766.5,220.5L767.5,220.5L768.5,225.5L769.5,234.5L770.5,246.5L771.5,261.5L772.5,275.5L773.5,289.5L774.5,300.5L775.5,308.5L776.5,311.5L777.5,310.5L778.5,306.5L779.5,299.5L780.5,290.5L781.5,280.5L782.5,269.5L783.5,257.5L784.5,246.5L785.5,236.5L786.5,228.5L787.5,223.5L788.5,220.5L789.5,220.5L790.5,225.5L791.5,234.5L792.5,246.5L793.5,260.5L794.5,275.5L795.5,289.5L796.5,300.5L797.5,307.5L798.5,310.5L799.5,309.5L800.5,305.5L801.5,298.5L802.5,289.5L803.5,279.5L804.5,267.5L805.5,256.5L806.5,245.5L807.5,235.5L808.5,227.5L809.5,222.5L810.5,220.5L811.5,221.5L812.5,227.5L813.5,237.5L814.5,250.5L815.5,264.5L816.5,279.5L817.5,292.5L818.5,302.5L819.5,308.5L820.5,310.5L821.5,308.5L822.5,303.5L823.5,296.5L824.5,286.5L825.5,276.5L826.5,264.5L827.5,253.5L828.5,242.5L829.5,233.5L830.5,226.5L831.5,222.5L832.5,221.5L833.5,223.5L834.5,230.5L835.5,240.5L836.5,253.5L837.5,268.5L838.5,282.5L839.5,294.5L840.5,303.5L841.5,308.5L842.5,309.5L843.5,306.5L844.5,301.5L845.5,293.5L846.5,284.5L847.5,273.5L848.5,261.5L849.5,250.5L850.5,240.5L851.5,232.5L852.5,226.5L853.5,222.5L854.5,221.5L855.5,225.5L856.5,232.5L857.5,244.5L858.5,257.5L859.5,271.5L860.5,285.5L861.5,296.5L862.5,304.5L863.5,308.5L864.5,308.5L865.5,305.5L866.5,299.5L867.5,291.5L868.5,281.5L869.5,270.5L870.5,259.5L871.5,248.5L872.5,238.5L873.5,230.5L874.5,225.5L875.5,222.5L876.5,222.5L877.5,227.5L878.5,235.5L879.5,247.5L880.5,261.5L881.5,275.5L882.5,288.5L883.5,298.5L884.5,305.5L885.5,308.5L886.5,307.5L887.5,303.5L888.5,296.5L889.5,288.5L890.5,278.5L891.5,267.5L892.5,256.5L893.5,246.5L894.5,237.5L895.5,229.5L896.5,224.5L897.5,222.5L898.5,224.5L899.5,229.5L900.5,238.5L901.5,250.5L902.5,264.5L903.5,278.5L904.5,290.5L905.5,300.5L906.5,306.5L907.5,307.5L908.5,306.5L909.5,301.5L910.5,295.5L911.5,286.5L912.5,276.5L913.5,266.5L914.5,255.5L915.5,245.5L916.5,236.5L917.5,230.5L918.5,225.5L919.5,223.5L920.5,224.5L921.5,230.5L922.5,239.5L923.5,251.5L924.5,264.5L925.5,278.5L926.5,290.5L927.5,299.5L928.5,305.5L929.5,307.5L930.5,305.5L931.5,300.5L932.5,294.5L933.5,285.5L934.5,275.5L935.5,264.5L936.5,254.5L937.5,244.5L938.5,235.5L939.5,229.5L940.5,225.5L941.5,223.5L942.5,226.5L943.5,232.5L944.5,242.5L945.5,254.5L946.5,267.5L947.5,281.5L948.5,292.5L949.5,301.5L950.5,305.5L951.5,306.5L952.5,304.5L953.5,299.5L954.5,291.5L955.5,282.5L956.5,272.5L957.5,262.5L958.5,251.5L959.5,242.5L960.5,234.5L961.5,228.5L962.5,225.5L963.5,224.5L964.5,227.5L965.5,235.5L966.5,245.5L967.5,257.5L968.5,271.5L969.5,283.5L970.5,294.5L971.5,302.5L972.5,305.5L973.5,305.5L974.5,302.5L975.5,296.5L976.5,289.5L977.5,280.5L978.5,269.5L979.5,259.5L980.5,249.5L981.5,240.5L982.5,233.5L983.5,228.5L984.5,225.5L985.5,225.5L986.5,229.5L987.5,237.5L988.5,248.5L989.5,261.5L990.5,274.5L991.5,286.5L992.5,296.5L993.5,302.5L994.5,305.5L995.5,304.5L996.5,300.5L997.5,294.5L998.5,286.5L999.5,277.5L1000.5,267.5L1001.5,257.5L1002.5,247.5L1003.5,239.5L1004.5,232.5" stroke="#00ff00" stroke-width="1" fill="none" stroke-linejoin="miter"/><path d="M65.5,522.5L66.5,522.5L67.5,522.5L68.5,522.5L69.5,522.5L70.5,522.5L71.5,522.5L72.5,522.5L73.5,522.5L74.5,522.5L75.5,522.5L76.5,522.5L77.5,522.5L78.5,522.5L79.5,521.5L80.5,522.5L81.5,522.5L82.5,522.5L83.5,522.5L84.5,522.5L85.5,522.5L86.5,522.5L87.5,523.5L88.5,523.5L89.5,523.5L90.5,523.5L91.5,523.5L92.5,523.5L93.5,523.5L94.5,523.5L95.5,524.5L96.5,523.5L97.5,523.5L98.5,523.5L99.5,523.5L100.5,523.5L101.5,523.5L102.5,523.5L103.5,523.5L104.5,523.5L105.5,523.5L106.5,523.5L107.5,523.5L108.5,523.5L109.5,523.5L110.5,523.5L111.5,523.5L112.5,523.5L113.5,523.5L114.5,523.5L115.5,523.5L116.5,523.5L117.5,523.5L118.5,523.5L119.5,523.5L120.5,524.5L121.5,523.5L122.5,522.5L123.5,522.5L124.5,522.5L125.5,523.5L126.5,523.5L127.5,523.5L128.5,523.5L129.5,523.5L130.5,524.5L131.5,523.5L132.5,522.5L133.5,522.5L134.5,522.5L135.5,522.5L136.5,523.5L137.5,523.5L138.5,523.5L139.5,523.5L140.5,523.5L141.5,523.5L142.5,523.5L143.5,523.5L144.5,523.5L145.5,523.5L146.5,523.5L147.5,523.5L148.5,523.5L149.5,523.5L150.5,523.5L151.5,523.5L152.5,523.5L153.5,523.5L154.5,522.5L155.5,522.5L156.5,522.5L157.5,523.5L158.5,523.5L159.5,523.5L160.5,523.5L161.5,523.5L162.5,523.5L163.5,523.5L164.5,523.5L165.5,523.5L166.5,523.5L167.5,522.5L168.5,522.5L169.5,522.5L170.5,522.5L171.5,524.5L172.5,523.5L173.5,522.5L174.5,522.5L175.5,522.5L176.5,522.5L177.5,522.5L178.5,522.5L179.5,522.5L180.5,522.5L181.5,522.5L182.5,522.5L183.5,522.5L184.5,521.5L185.5,522.5L186.5,523.5L187.5,522.5L188.5,522.5L189.5,523.5L190.5,522.5L191.5,523.5L192.5,523.5L193.5,523.5L194.5,523.5L195.5,523.5L196.5,523.5L197.5,523.5L198.5,524.5L199.5,523.5L200.5,523.5L201.5,523.5L202.5,523.5L203.5,522.5L204.5,523.5L205.5,522.5L206.5,522.5L207.5,522.5L208.5,522.5L209.5,522.5L210.5,522.5L211.5,522.5L212.5,522.5L213.5,522.5L214.5,522.5L215.5,522.5L216.5,522.5L217.5,522.5L218.5,522.5L219.5,523.5L220.5,523.5L221.5,523.5L222.5,523.5L223.5,523.5L224.5,523.5L225.5,523.5L226.5,522.5L227.5,522.5L228.5,522.5L229.5,523.5L230.5,523.5L231.5,523.5L232.5,523.5L233.5,523.5L234.5,523.5L235.5,523.5L236.5,523.5L237.5,523.5L238.5,523.5L239.5,523.5L240.5,524.5L241.5,523.5L242.5,523.5L243.5,524.5L244.5,523.5L245.5,523.5L246.5,523.5L247.5,523.5L248.5,523.5L249.5,522.5L250.5,522.5L251.5,522.5L252.5,522.5L253.5,522.5L254.5,523.5L255.5,522.5L256.5,522.5L257.5,522.5L258.5,522.5L259.5,522.5L260.5,522.5L261.5,522.5L262.5,522.5L263.5,522.5L264.5,522.5L265.5,522.5L266.5,522.5L267.5,522.5L268.5,522.5L269.5,522.5L270.5,522.5L271.5,522.5L272.5,522.5L273.5,522.5L274.5,522.5L275.5,522.5L276.5,522.5L277.5,522.5L278.5,522.5L279.5,522.5L280.5,522.5L281.5,523.5L282.5,523.5L283.5,523.5L284.5,523.5L285.5,523.5L286.5,523.5L287.5,523.5L288.5,523.5L289.5,523.5L290.5,523.5L291.5,523.5L292.5,523.5L293.5,523.5L294.5,522.5L295.5,523.5L296.5,522.5L297.5,522.5L298.5,522.5L299.5,522.5L300.5,522.5L301.5,522.5L302.5,522.5L303.5,522.5L304.5,522.5L305.5,522.5L306.5,522.5L307.5,522.5L308.5,522.5L309.5,522.5L310.5,522.5L311.5,522.5L312.5,522.5L313.5,522.5L314.5,522.5L315.5,522.5L316.5,522.5L317.5,522.5L318.5,522.5L319.5,522.5L320.5,523.5L321.5,522.5L322.5,522.5L323.5,522.5L324.5,522.5L325.5,522.5L326.5,522.5L327.5,522.5L328.5,522.5L329.5,522.5L330.5,522.5L331.5,522.5L332.5,522.5L333.5,522.5L334.5,522.5L335.5,522.5L336.5,522.5L337.5,523.5L338.5,523.5L339.5,521.5L340.5,522.5L341.5,523.5L342.5,523.5L343.5,523.5L344.5,523.5L345.5,523.5L346.5,523.5L347.5,522.5L348.5,522.5L349.5,522.5L350.5,523.5L351.5,522.5L352.5,522.5L353.5,522.5L354.5,522.5L355.5,522.5L356.5,522.5L357.5,522.5L358.5,522.5L359.5,522.5L360.5,522.5L361.5,522.5L362.5,523.5L363.5,523.5L364.5,523.5L365.5,523.5L366.5,523.5L367.5,523.5L368.5,523.5L369.5,523.5L370.5,523.5L371.5,523.5L372.5,523.5L373.5,523.5L374.5,523.5L375.5,523.5L376.5,524.5L377.5,523.5L378.5,523.5L379.5,523.5L380.5,523.5L381.5,523.5L382.5,523.5L383.5,523.5L384.5,523.5L385.5,524.5L386.5,523.5L387.5,522.5L388.5,522.5L389.5,522.5L390.5,522.5L391.5,522.5L392.5,522.5L393.5,522.5L394.5,522.5L395.5,522.5L396.5,522.5L397.5,522.5L398.5,522.5L399.5,524.5L400.5,523.5L401.5,523.5L402.5,523.5L403.5,523.5L404.5,523.5L405.5,523.5L406.5,523.5L407.5,523.5L408.5,523.5L409.5,523.5L410.5,522.5L411.5,522.5L412.5,522.5L413.5,522.5L414.5,522.5L415.5,522.5L416.5,522.5L417.5,522.5L418.5,523.5L419.5,523.5L420.5,523.5L421.5,523.5L422.5,523.5L423.5,523.5L424.5,523.5L425.5,523.5L426.5,522.5L427.5,523.5L428.5,522.5L429.5,522.5L430.5,522.5L431.5,522.5L432.5,522.5L433.5,522.5L434.5,522.5L435.5,522.5L436.5,522.5L437.5,522.5L438.5,522.5L439.5,522.5L440.5,523.5L441.5,522.5L442.5,522.5L443.5,522.5L444.5,522.5L445.5,522.5L446.5,523.5L447.5,523.5L448.5,523.5L449.5,523.5L450.5,523.5L451.5,523.5L452.5,523.5L453.5,523.5L454.5,523.5L455.5,523.5L456.5,523.5L457.5,523.5L458.5,523.5L459.5,523.5L460.5,523.5L461.5,522.5L462.5,522.5L463.5,523.5L464.5,523.5L465.5,523.5L466.5,523.5L467.5,523.5L468.5,523.5L469.5,523.5L470.5,523.5L471.5,523.5L472.5,523.5L473.5,523.5L474.5,523.5L475.5,523.5L476.5,523.5L477.5,523.5L478.5,523.5L479.5,523.5L480.5,523.5L481.5,523.5L482.5,523.5L483.5,523.5L484.5,523.5L485.5,523.5L486.5,523.5L487.5,522.5L488.5,522.5L489.5,522.5L490.5,522.5L491.5,522.5L492.5,523.5L493.5,523.5L494.5,523.5L495.5,523.5L496.5,523.5L497.5,523.5L498.5,523.5L499.5,523.5L500.5,523.5L501.5,523.5L502.5,523.5L503.5,523.5L504.5,523.5L505.5,523.5L506.5,523.5L507.5,523.5L508.5,523.5L509.5,523.5L510.5,523.5L511.5,522.5L512.5,521.5L513.5,522.5L514.5,522.5L515.5,522.5L516.5,522.5L517.5,522.5L518.5,522.5L519.5,522.5L520.5,522.5L521.5,522.5L522.5,522.5L523.5,523.5L524.5,523.5L525.5,523.5L526.5,523.5L527.5,523.5L528.5,523.5L529.5,523.5L530.5,522.5L531.5,522.5L532.5,522.5L533.5,522.5L534.5,522.5L535.5,522.5L536.5,522.5L537.5,522.5L538.5,522.5L539.5,522.5L540.5,522.5L541.5,522.5L542.5,522.5L543.5,522.5L544.5,522.5L545.5,522.5L546.5,522.5L547.5,522.5L548.5,522.5L549.5,522.5L550.5,522.5L551.5,522.5L552.5,523.5L553.5,523.5L554.5,523.5L555.5,523.5L556.5,523.5L557.5,523.5L558.5,523.5L559.5,523.5L560.5,523.5L561.5,523.5L562.5,523.5L563.5,523.5L564.5,523.5L565.5,522.5L566.5,522.5L567.5,523.5L568.5,522.5L569.5,522.5L570.5,522.5L571.5,522.5L572.5,522.5L573.5,522.5L574.5,522.5L575.5,522.5L576.5,522.5L577.5,523.5L578.5,523.5L579.5,523.5L580.5,523.5L581.5,523.5L582.5,523.5L583.5,523.5L584.5,523.5L585.5,523.5L586.5,523.5L587.5,523.5L588.5,523.5L589.5,523.5L590.5,523.5L591.5,523.5L592.5,522.5L593.5,522.5L594.5,522.5L595.5,522.5L596.5,522.5L597.5,522.5L598.5,522.5L599.5,522.5L600.5,522.5L601.5,522.5L602.5,522.5L603.5,522.5L604.5,560.5L605.5,561.5L606.5,561.5L607.5,561.5L608.5,561.5L609.5,561.5L610.5,561.5L611.5,561.5L612.5,561.5L613.5,560.5L614.5,560.5L615.5,560.5L616.5,562.5L617.5,561.5L618.5,562.5L619.5,562.5L620.5,562.5L621.5,562.5L622.5,562.5L623.5,562.5L624.5,562.5L625.5,561.5L626.5,561.5L627.5,561.5L628.5,561.5L629.5,560.5L630.5,560.5L631.5,560.5L632.5,560.5L633.5,560.5L634.5,560.5L635.5,560.5L636.5,560.5L637.5,561.5L638.5,561.5L639.5,561.5L640.5,561.5L641.5,561.5L642.5,561.5L643.5,561.5L644.5,561.5L645.5,561.5L646.5,561.5L647.5,561.5L648.5,561.5L649.5,561.5L650.5,561.5L651.5,561.5L652.5,561.5L653.5,560.5L654.5,560.5L655.5,560.5L656.5,560.5L657.5,562.5L658.5,561.5L659.5,561.5L660.5,561.5L661.5,561.5L662.5,561.5L663.5,561.5L664.5,561.5L665.5,561.5L666.5,561.5L667.5,561.5L668.5,561.5L669.5,561.5L670.5,561.5L671.5,561.5L672.5,561.5L673.5,561.5L674.5,561.5L675.5,561.5L676.5,561.5L677.5,561.5L678.5,561.5L679.5,561.5L680.5,561.5L681.5,561.5L682.5,562.5L683.5,562.5L684.5,562.5L685.5,562.5L686.5,562.5L687.5,562.5L688.5,562.5L689.5,562.5L690.5,561.5L691.5,561.5L692.5,561.5L693.5,561.5L694.5,561.5L695.5,561.5L696.5,560.5L697.5,559.5L698.5,560.5L699.5,560.5L700.5,561.5L701.5,561.5L702.5,561.5L703.5,562.5L704.5,562.5L705.5,562.5L706.5,562.5L707.5,562.5L708.5,561.5L709.5,561.5L710.5,561.5L711.5,561.5L712.5,562.5L713.5,561.5L714.5,561.5L715.5,561.5L716.5,561.5L717.5,561.5L718.5,561.5L719.5,561.5L720.5,561.5L721.5,561.5L722.5,561.5L723.5,560.5L724.5,560.5L725.5,560.5L726.5,560.5L727.5,560.5L728.5,562.5L729.5,562.5L730.5,562.5L731.5,561.5L732.5,561.5L733.5,561.5L734.5,561.5L735.5,561.5L736.5,561.5L737.5,561.5L738.5,562.5L739.5,562.5L740.5,562.5L741.5,562.5L742.5,562.5L743.5,562.5L744.5,562.5L745.5,561.5L746.5,561.5L747.5,561.5L748.5,562.5L749.5,562.5L750.5,562.5L751.5,562.5L752.5,562.5L753.5,561.5L754.5,562.5L755.5,562.5L756.5,561.5L757.5,561.5L758.5,561.5L759.5,561.5L760.5,562.5L761.5,562.5L762.5,562.5L763.5,562.5L764.5,562.5L765.5,562.5L766.5,562.5L767.5,562.5L768.5,562.5L769.5,560.5L770.5,560.5L771.5,560.5L772.5,560.5L773.5,560.5L774.5,560.5L775.5,561.5L776.5,560.5L777.5,560.5L778.5,560.5L779.5,560.5L780.5,560.5L781.5,560.5L782.5,560.5L783.5,560.5L784.5,560.5L785.5,561.5L786.5,561.5L787.5,561.5L788.5,561.5L789.5,561.5L790.5,561.5L791.5,561.5L792.5,561.5L793.5,561.5L794.5,561.5L795.5,563.5L796.5,562.5L797.5,562.5L798.5,562.5L799.5,562.5L800.5,562.5L801.5,562.5L802.5,562.5L803.5,562.5L804.5,561.5L805.5,561.5L806.5,561.5L807.5,561.5L808.5,561.5L809.5,561.5L810.5,561.5L811.5,561.5L812.5,561.5L813.5,561.5L814.5,562.5L815.5,560.5L816.5,560.5L817.5,560.5L818.5,560.5L819.5,560.5L820.5,560.5L821.5,560.5L822.5,560.5L823.5,560.5L824.5,562.5L825.5,562.5L826.5,562.5L827.5,562.5L828.5,562.5L829.5,561.5L830.5,561.5L831.5,561.5L832.5,562.5L833.5,562.5L834.5,562.5L835.5,562.5L836.5,562.5L837.5,562.5L838.5,562.5L839.5,562.5L840.5,562.5L841.5,562.5L842.5,561.5L843.5,562.5L844.5,562.5L845.5,560.5L846.5,560.5L847.5,560.5L848.5,560.5L849.5,561.5L850.5,561.5L851.5,561.5L852.5,561.5L853.5,561.5L854.5,561.5L855.5,561.5L856.5,561.5L857.5,561.5L858.5,561.5L859.5,561.5L860.5,561.5L861.5,561.5L862.5,561.5L863.5,561.5L864.5,561.5L865.5,561.5L866.5,561.5L867.5,561.5L868.5,561.5L869.5,560.5L870.5,560.5L871.5,561.5L872.5,561.5L873.5,561.5L874.5,561.5L875.5,561.5L876.5,560.5L877.5,560.5L878.5,560.5L879.5,560.5L880.5,560.5L881.5,560.5L882.5,560.5L883.5,560.5L884.5,547.5L885.5,534.5L886.5,523.5L887.5,523.5L888.5,523.5L889.5,523.5L890.5,523.5L891.5,523.5L892.5,523.5L893.5,522.5L894.5,522.5L895.5,522.5L896.5,522.5L897.5,523.5L898.5,523.5L899.5,522.5L900.5,522.5L901.5,522.5L902.5,522.5L903.5,522.5L904.5,523.5L905.5,523.5L906.5,523.5L907.5,522.5L908.5,523.5L909.5,523.5L910.5,523.5L911.5,523.5L912.5,523.5L913.5,523.5L914.5,523.5L915.5,523.5L916.5,523.5L917.5,523.5L918.5,523.5L919.5,523.5L920.5,523.5L921.5,523.5L922.5,523.5L923.5,523.5L924.5,523.5L925.5,522.5L926.5,522.5L927.5,522.5L928.5,522.5L929.5,522.5L930.5,522.5L931.5,523.5L932.5,523.5L933.5,523.5L934.5,523.5L935.5,522.5L936.5,522.5L937.5,522.5L938.5,522.5L939.5,522.5L940.5,523.5L941.5,522.5L942.5,522.5L943.5,523.5L944.5,523.5L945.5,523.5L946.5,523.5L947.5,523.5L948.5,523.5L949.5,523.5L950.5,523.5L951.5,522.5L952.5,522.5L953.5,522.5L954.5,522.5L955.5,522.5L956.5,522.5L957.5,523.5L958.5,523.5L959.5,523.5L960.5,523.5L961.5,523.5L962.5,523.5L963.5,523.5L964.5,523.5L965.5,523.5L966.5,523.5L967.5,523.5L968.5,523.5L969.5,523.5L970.5,523.5L971.5,523.5L972.5,523.5L973.5,522.5L974.5,522.5L975.5,522.5L976.5,522.5L977.5,522.5L978.5,522.5L979.5,522.5L980.5,523.5L981.5,523.5L982.5,523.5L983.5,523.5L984.5,523.5L985.5,523.5L986.5,523.5L987.5,523.5L988.5,523.5L989.5,522.5L990.5,522.5L991.5,522.5L992.5,522.5L993.5,522.5L994.5,522.5L995.5,522.5L996.5,522.5L997.5,522.5L998.5,522.5L999.5,522.5L1000.5,522.5L1001.5,523.5L1002.5,522.5L1003.5,522.5L1004.5,522.5" stroke="#ff0000" stroke-width="1" fill="none"/></svg>
<span id="t23" class="t" style="left:253.70px;top:136.71px;font-size:9.5px;line-height:12px;color:#c8f0c8;font-weight:normal;font-style:normal;transform:scaleX(1.0192);transform-origin:0 100%;">83 ms</span>
<span id="t24" class="t" style="left:441.70px;top:136.71px;font-size:9.5px;line-height:12px;color:#c8f0c8;font-weight:normal;font-style:normal;transform:scaleX(1.0192);transform-origin:0 100%;">93 ms</span>
<span id="t25" class="t" style="left:629.50px;top:136.71px;font-size:9.5px;line-height:12px;color:#c8f0c8;font-weight:normal;font-style:normal;transform:scaleX(1.0161);transform-origin:0 100%;">103 ms</span>
<span id="t26" class="t" style="left:818.00px;top:136.71px;font-size:9.5px;line-height:12px;color:#c8f0c8;font-weight:normal;font-style:normal;transform:scaleX(1.0500);transform-origin:0 100%;">113 ms</span>
<span id="t27" class="t" style="right:967.50px;top:154.31px;font-size:9.5px;line-height:12px;color:#a0a0a0;font-weight:normal;font-style:normal;">1.50</span>
<span id="t28" class="t" style="right:964.50px;top:405.01px;font-size:9.5px;line-height:12px;color:#a0a0a0;font-weight:normal;font-style:normal;">-1.50</span>
<span id="t29" class="t" style="right:967.50px;top:429.01px;font-size:9.5px;line-height:12px;color:#a0a0a0;font-weight:normal;font-style:normal;">1.50</span>
<span id="t30" class="t" style="right:964.50px;top:679.31px;font-size:9.5px;line-height:12px;color:#a0a0a0;font-weight:normal;font-style:normal;">-1.50</span>
<span id="t31" class="t k" style="left:9.00px;top:398.11px;font-size:17px;line-height:22px;color:#fff;font-weight:bold;font-style:normal;">1</span>
<span id="t32" class="t k" style="left:9.00px;top:673.11px;font-size:17px;line-height:22px;color:#fff;font-weight:bold;font-style:normal;">2</span>
<div class="a dith" style="left:1006px;top:135px;width:14px;height:565px;"></div>
<div class="a dith" style="left:4px;top:700px;width:1016px;height:15px;"></div>
<div class="btn" style="left:1006px;top:135px;width:13px;height:15px;"></div><svg style="left:1010px;top:141px" width="5" height="3" viewBox="0 0 5 3" shape-rendering="crispEdges"><path d="M0 3h5v-1h-1v-1h-1v-1h-1v1h-1v1h-1z" fill="#000"/></svg>
<div class="btn" style="left:1006px;top:151px;width:13px;height:17px;"></div>
<div class="btn" style="left:1006px;top:683px;width:13px;height:16px;"></div><svg style="left:1010px;top:690px" width="5" height="3" viewBox="0 0 5 3" shape-rendering="crispEdges"><path d="M0 0h5v1h-1v1h-1v1h-1v-1h-1v-1h-1z" fill="#000"/></svg>
<div class="btn" style="left:4px;top:700px;width:16px;height:14px;"></div><svg style="left:10px;top:704px" width="3" height="5" viewBox="0 0 3 5" shape-rendering="crispEdges"><path d="M3 0v5h-1v-1h-1v-1h-1v-1h1v-1h1v-1z" fill="#000"/></svg>
<div class="btn" style="left:26px;top:700px;width:17px;height:14px;"></div>
<div class="btn" style="left:988px;top:700px;width:16px;height:14px;"></div><svg style="left:995px;top:704px" width="3" height="5" viewBox="0 0 3 5" shape-rendering="crispEdges"><path d="M0 0v5h1v-1h1v-1h1v-1h-1v-1h-1v-1z" fill="#000"/></svg>
<div class="a" style="left:1005px;top:700px;width:15px;height:15px;background:#ece9ee;border-left:1px solid #fff;border-top:1px solid #fff;"></div>
<div class="a" style="left:0px;top:715px;width:1024px;height:4px;background:linear-gradient(to bottom,#c0bec4 0px,#c0bec4 2px,#a09ea6 2px,#a09ea6 4px);"></div>
<div class="a" style="left:0px;top:719px;width:1024px;height:3px;background:#ece9ee;"></div>
<div class="a" style="left:0px;top:722px;width:1024px;height:15px;background:#ece9ee;"></div>
<div class="a" style="left:0px;top:737px;width:1024px;height:1px;background:#fff;"></div>
<div class="a" style="left:1px;top:721px;width:88px;height:16px;border-left:1px solid #a8a6ae;border-top:1px solid #a8a6ae;border-right:1px solid #fff;"></div>
<div class="a" style="left:92px;top:721px;width:248px;height:16px;border-left:1px solid #a8a6ae;border-top:1px solid #a8a6ae;border-right:1px solid #fff;"></div>
<div class="a" style="left:343px;top:721px;width:247px;height:16px;border-left:1px solid #a8a6ae;border-top:1px solid #a8a6ae;border-right:1px solid #fff;"></div>
<div class="a" style="left:592px;top:721px;width:429px;height:16px;border-left:1px solid #a8a6ae;border-top:1px solid #a8a6ae;border-right:1px solid #fff;"></div>
<span id="t33" class="t k" style="left:33.50px;top:723.19px;font-size:11px;line-height:14px;color:#000;font-weight:normal;font-style:normal;transform:scaleX(0.9727);transform-origin:0 100%;">200000  Гц</span>
<span id="t34" class="t k" style="left:99.50px;top:723.19px;font-size:11px;line-height:14px;color:#000;font-weight:normal;font-style:normal;transform:scaleX(0.9472);transform-origin:0 100%;">USB Осциллограф 1.05.166</span>
<span id="t35" class="t k" style="left:594.00px;top:723.19px;font-size:11px;line-height:14px;color:#000;font-weight:normal;font-style:normal;transform:scaleX(1.0435);transform-origin:0 100%;">11.78 сек</span>
<div class="a" style="left:0px;top:738px;width:1024px;height:30px;background:linear-gradient(to bottom,#2840a0 0px,#2840a0 1px,#98ccf4 1px,#98ccf4 2px,#84c0ec 2px,#78b4ea 6px,#6aa4e4 8px,#5a94de 16px,#3a7cd0 16px,#3468c0 22px,#2e58b4 27px,#2c54b0 29px,#24449c 29px,#24449c 30px);"></div>
<div class="a" style="left:-12px;top:739px;width:100px;height:29px;border-radius:0 14px 12px 0 / 0 18px 14px 0;background:linear-gradient(to bottom,#b0dcb0 0px,#88c888 1.5px,#74bc74 4px,#5cb05c 8px,#48a448 14px,#1a9a1a 15px,#18a818 19px,#1cbc1c 24px,#22cc22 29px);box-shadow:inset -2px 0 3px rgba(0,60,0,0.45), inset 0 1px 1px rgba(255,255,255,0.35), 1px 0 1px rgba(20,40,120,0.6);"></div><svg style="left:10px;top:744px" width="16" height="17" viewBox="0 0 16 17">
<path d="M3.200 1.500C4.800 0.600 6.300 1 7.600 2L6.500 7.300C5.200 6.300 3.700 6 2 6.900Z" fill="#e8502c"/>
<path d="M8.600 2.400C10 3.300 11.500 3.500 13.200 2.700L12 8C10.400 8.800 8.900 8.600 7.500 7.700Z" fill="#78b838"/>
<path d="M1.800 8C3.400 7.100 4.900 7.400 6.300 8.400L5.200 13.700C3.800 12.700 2.300 12.400 0.600 13.300Z" fill="#3c88e0"/>
<path d="M7.300 8.800C8.700 9.700 10.200 9.900 11.800 9.100L10.700 14.400C9.100 15.200 7.600 15 6.200 14.100Z" fill="#f4c030"/>
</svg><span id="t36" class="t k" style="left:23.50px;top:739.74px;font-size:19.5px;line-height:25px;color:#fff;font-weight:bold;font-style:normal;text-shadow:1px 1px 1px rgba(0,50,0,0.7);transform:skewX(-9deg) scaleX(0.8372);transform-origin:0 100%;">пуск</span><div class="a" style="left:97px;top:742px;width:158px;height:23px;border-radius:3px;background:linear-gradient(to bottom,#74b0f0 0px,#5c9ce6 2px,#4c8ce0 8px,#3878d0 12px,#3470cc 23px);border:1px solid #3060b8;box-shadow:inset 1px 1px 0 rgba(255,255,255,0.25);"></div><span id="t37" class="t k" style="left:125.50px;top:746.19px;font-size:11px;line-height:14px;color:#fff;font-weight:normal;font-style:normal;transform:scaleX(0.9186);transform-origin:0 100%;">Smsdiag</span><div class="a" style="left:257px;top:742px;width:158px;height:23px;border-radius:3px;background:linear-gradient(to bottom,#74b0f0 0px,#5c9ce6 2px,#4c8ce0 8px,#3878d0 12px,#3470cc 23px);border:1px solid #3060b8;box-shadow:inset 1px 1px 0 rgba(255,255,255,0.25);"></div><span id="t38" class="t k" style="left:285.50px;top:746.19px;font-size:11px;line-height:14px;color:#fff;font-weight:normal;font-style:normal;transform:scaleX(1.0396);transform-origin:0 100%;">скрин 4.png - Paint....</span><div class="a" style="left:417px;top:742px;width:158px;height:23px;border-radius:3px;background:linear-gradient(to bottom,#74b0f0 0px,#5c9ce6 2px,#4c8ce0 8px,#3878d0 12px,#3470cc 23px);border:1px solid #3060b8;box-shadow:inset 1px 1px 0 rgba(255,255,255,0.25);"></div><span id="t39" class="t k" style="left:445.50px;top:746.19px;font-size:11px;line-height:14px;color:#fff;font-weight:normal;font-style:normal;transform:scaleX(1.0212);transform-origin:0 100%;">Мои документы</span><div class="a" style="left:577px;top:742px;width:158px;height:23px;border-radius:3px;background:linear-gradient(to bottom,#1c3e8c 0px,#24489c 3px,#2850a8 12px,#2a54ac 23px);border:1px solid #183478;box-shadow:inset 1px 1px 1px rgba(0,0,40,0.5);"></div><span id="t40" class="t k" style="left:605.50px;top:746.19px;font-size:11px;line-height:14px;color:#fff;font-weight:normal;font-style:normal;transform:scaleX(0.9381);transform-origin:0 100%;">USB Осциллограф</span><svg style="left:105px;top:745px" width="18" height="16" viewBox="0 0 18 16">
<path d="M2 7.500L3.500 5.500H6L7 3.500H11L12 5.500H14.500L16.500 8.500L14.500 12H12L11 13.500H5L3.500 11.500H2Z" fill="#1c50b0" stroke="#f09020" stroke-width="1.800" stroke-linejoin="round"/>
<path d="M6 6.500H11" stroke="#80b8f4" stroke-width="1"/></svg><svg style="left:266px;top:745px" width="16" height="17" viewBox="0 0 16 17">
<rect x="0.500" y="0.500" width="13" height="15.500" fill="#fff" stroke="#202020"/>
<rect x="2" y="3" width="10" height="8" fill="#2858c0"/><rect x="2" y="3" width="6" height="4" fill="#5c90e8"/>
<path d="M14.500 3L5 12" stroke="#c01010" stroke-width="1.600"/><path d="M5 12L3 14" stroke="#000" stroke-width="1.600"/>
<path d="M2 13.500H9" stroke="#404040"/></svg><svg style="left:426px;top:744px" width="16" height="18" viewBox="0 0 16 18">
<path d="M1 2.500L5 1V17L1 15.500Z" fill="#60a860"/><path d="M5 1L8 2.500V17H5Z" fill="#90c890"/>
<rect x="6.500" y="3.500" width="8" height="13.500" fill="#f4f4f4" stroke="#888"/>
<rect x="8" y="5" width="2" height="2" fill="#3c78d8"/><rect x="11" y="5" width="2" height="2" fill="#3c78d8"/>
<path d="M8 9.500H13M8 11.500H13M8 13.500H13" stroke="#909090"/></svg><svg style="left:586px;top:745px" width="16" height="16" viewBox="0 0 16 16" shape-rendering="crispEdges">
<rect x="0" y="0" width="16" height="16" fill="#8a8a8a"/><rect x="1" y="1" width="14" height="14" fill="#000"/>
<path d="M1.500 3.500h2v-1h2v1h2v-1h2v1h2v-1h2" stroke="#ff2020" fill="none"/>
<path d="M1.500 6.500h2v-1h2v1h2v-1h2v1h2v-1h2" stroke="#20e020" fill="none"/>
<path d="M1.500 9.500h13" stroke="#404040" fill="none"/>
<path d="M1.500 12.500h4v-4h1v5h3v-1h5" stroke="#20e0e0" fill="none"/></svg><div class="a" style="left:866px;top:746px;width:15px;height:13px;background:#2c5cb4;"></div><span id="t41" class="t k" style="left:867.50px;top:746.19px;font-size:11px;line-height:14px;color:#fff;font-weight:normal;font-style:normal;transform:scaleX(0.9000);transform-origin:0 100%;">EN</span><div class="a" style="left:895px;top:739px;width:129px;height:29px;background:linear-gradient(to bottom,#e4f0fc 0px,#c8dcf6 2px,#b0ccf0 8px,#98bcea 14px,#88b0e4 18px,#9cc0ec 24px,#b4d2f4 29px);border-left:1px solid #e8f2fc;box-shadow:-1px 0 0 #3464b8;"></div><span id="t42" class="t k" style="left:983.50px;top:746.19px;font-size:11px;line-height:14px;color:#000;font-weight:normal;font-style:normal;transform:scaleX(1.0000);transform-origin:0 100%;">15:29</span><svg style="left:905px;top:744px" width="18" height="18" viewBox="0 0 18 18">
<path d="M3 6L7 1.500V4H10V8H7V10.500Z" fill="#30a830" stroke="#187018" stroke-width="0.800"/>
<path d="M4 13L13 8.500L16 11L7 16Z" fill="#b8b8c0" stroke="#505058" stroke-width="0.800"/>
<path d="M8 11L12 9L13.500 10.500L9.500 12.500Z" fill="#3048a0"/></svg><svg style="left:923px;top:744px" width="18" height="18" viewBox="0 0 18 18">
<circle cx="9.500" cy="8.500" r="7.500" fill="#f89818"/><circle cx="8.500" cy="9.500" r="4.500" fill="#fff"/><circle cx="8" cy="10" r="2.800" fill="#f89818"/>
<circle cx="5" cy="12.500" r="4.300" fill="#e01818" stroke="#fff" stroke-width="0.600"/>
<path d="M3 10.500L7 14.500M7 10.500L3 14.500" stroke="#fff" stroke-width="1.600"/></svg><svg style="left:942px;top:744px" width="18" height="18" viewBox="0 0 18 18">
<rect x="6" y="1" width="10" height="8" fill="#b07838" stroke="#705020" stroke-width="0.800"/><path d="M10 9.500V11H13" stroke="#606060"/>
<rect x="1" y="5" width="11" height="8.500" fill="#d02830" stroke="#801018" stroke-width="0.800"/>
<path d="M6.500 13.500V16M3.500 16.500H9.500" stroke="#606060" stroke-width="1.200"/></svg><svg style="left:959px;top:743px" width="20" height="20" viewBox="0 0 20 20">
<path d="M1.500 7H4.500L9 2.500V17.500L4.500 13H1.500Z" fill="#d8d8dc" stroke="#50505c" stroke-width="1"/>
<path d="M11 7.500C12.200 9 12.200 11 11 12.500M13 5.500C15 8 15 12 13 14.500M15 4C17.800 7.500 17.800 12.500 15 16" fill="none" stroke="#28a028" stroke-width="1.300"/></svg>
<div class="a" style="left:220px;top:111px;width:119px;height:19px;background:#ffffe1;border:1px solid #000;"></div>
<span id="t43" class="t k" style="left:223.00px;top:114.19px;font-size:11px;line-height:14px;color:#000;font-weight:normal;font-style:normal;transform:scaleX(0.9823);transform-origin:0 100%;">Все каналы по центру</span>
</body></html>
